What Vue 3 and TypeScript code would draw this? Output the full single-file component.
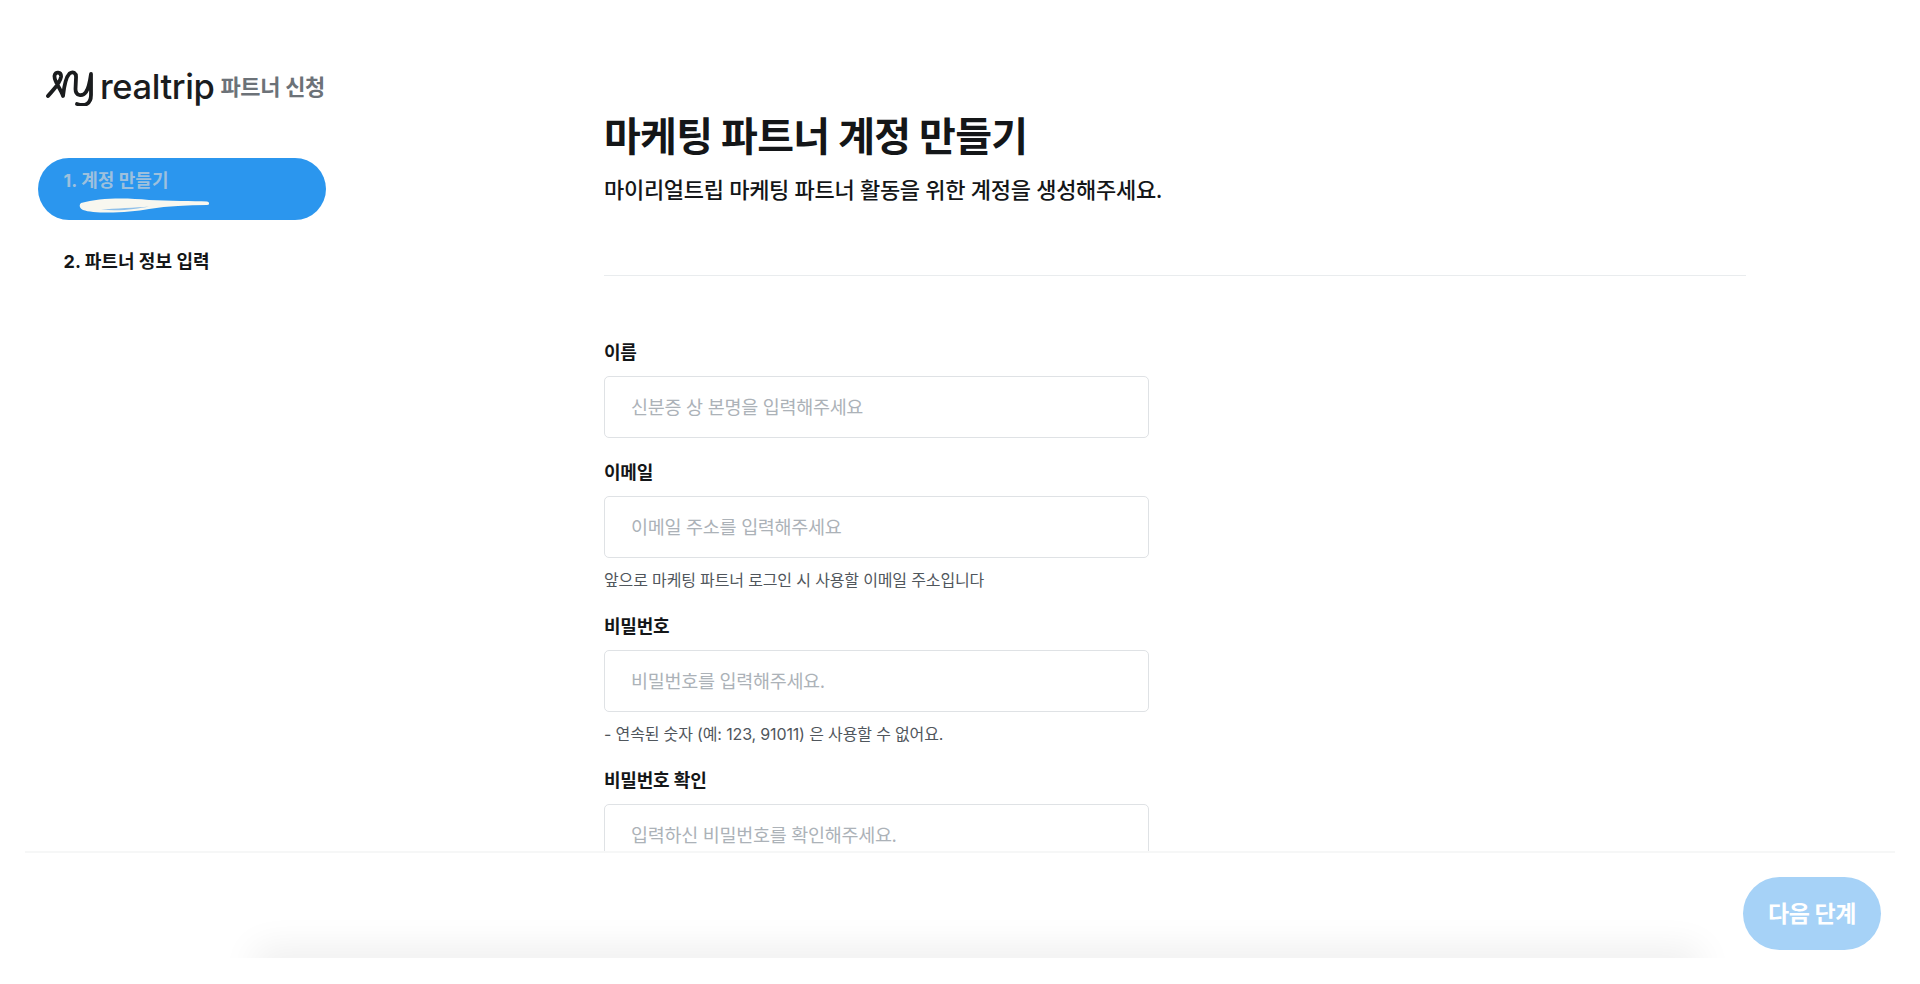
<script setup lang="ts">
interface Field {
  label: string
  placeholder: string
  help?: string
}

const fields: Field[] = [
  { label: '이름', placeholder: '신분증 상 본명을 입력해주세요' },
  {
    label: '이메일',
    placeholder: '이메일 주소를 입력해주세요',
    help: '앞으로 마케팅 파트너 로그인 시 사용할 이메일 주소입니다',
  },
  {
    label: '비밀번호',
    placeholder: '비밀번호를 입력해주세요.',
    help: '- 연속된 숫자 (예: 123, 91011) 은 사용할 수 없어요.',
  },
  { label: '비밀번호 확인', placeholder: '입력하신 비밀번호를 확인해주세요.' },
]
</script>

<template>
  <div class="page">
    <div class="main">
      <aside class="side">
        <div class="brand">
          <svg class="mark" width="54" height="38" viewBox="0 0 54 38" fill="none" aria-hidden="true">
            <path
              d="M2 28 C6 23 14 16 15 9 C15.5 3.5 9 3 8.5 8 C8 14 15 21 17 28 C18 19 20 9 23.5 5.5 C27 3 30.5 5 30 10 L29.5 21 C29.5 28 36.5 29 40 24 C43 20 44 13 45 6 L45 27 C45 36 39 38.5 31 36"
              stroke="#1a1c1e"
              stroke-width="3.8"
              stroke-linecap="round"
              stroke-linejoin="round"
            />
          </svg>
          <span class="word">realtrip</span>
          <span class="brand-sub">파트너 신청</span>
        </div>
        <nav class="steps">
          <div class="step step-active">
            <span class="step-title">1. 계정 만들기</span>
            <svg class="scribble" width="130" height="18" viewBox="0 0 130 18" aria-hidden="true">
              <path
                d="M2 6 C20 1 45 0.5 70 3 C90 4 115 4 128 4.5 C131 5.5 131 8 128 8 C108 8 90 9 70 12 C50 16 15 17 4 13 C0 11 0 8 2 6 Z"
                fill="#f8f7ef"
              />
              <path d="M22 12.5 C35 11.5 58 10.5 70 9.5 C58 12 40 14.5 22 12.5 Z" fill="#8fc0ea" />
            </svg>
          </div>
          <div class="step step-next">2. 파트너 정보 입력</div>
        </nav>
      </aside>

      <section class="content">
        <header class="head">
          <h1>마케팅 파트너 계정 만들기</h1>
          <p>마이리얼트립 마케팅 파트너 활동을 위한 계정을 생성해주세요.</p>
        </header>
        <form class="form" @submit.prevent>
          <div v-for="field in fields" :key="field.label" class="field">
            <label>{{ field.label }}</label>
            <input type="text" :placeholder="field.placeholder" />
            <small v-if="field.help">{{ field.help }}</small>
          </div>
        </form>
      </section>
    </div>

    <footer class="foot">
      <div class="foot-shade"></div>
      <button type="button" class="next">다음 단계</button>
    </footer>
  </div>
</template>

<style>
html,
body {
  margin: 0;
  background: #fff;
}
</style>

<style scoped>
.page {
  width: 1920px;
  height: 984px;
  overflow: hidden;
  display: flex;
  flex-direction: column;
  background: #fff;
  font-family: Inter, "Noto Sans CJK KR", "Noto Sans", sans-serif;
  color: #141618;
}
.main {
  height: 851px;
  flex: none;
  overflow: hidden;
  display: flex;
}
.side {
  width: 604px;
  flex: none;
  box-sizing: border-box;
  padding: 68px 0 0 37.5px;
}
.brand {
  display: flex;
  align-items: center;
  height: 38px;
  margin-left: 8.5px;
}
.mark {
  flex: none;
  margin-right: 1px;
}
.word {
  font-size: 34.5px;
  font-weight: 500;
  letter-spacing: -0.4px;
  line-height: 38px;
  color: #1a1c1e;
  margin-left: -1px;
}
.brand-sub {
  margin-left: 6px;
  font-size: 22px;
  font-weight: 700;
  letter-spacing: -0.3px;
  color: #6c7278;
  line-height: 38px;
}
.steps {
  margin-top: 52px;
  width: 288px;
}
.step {
  box-sizing: border-box;
  padding-left: 26px;
  font-size: 18px;
  font-weight: 700;
  letter-spacing: 0.05px;
}
.step-active {
  height: 62px;
  border-radius: 31px;
  background: #2b96ee;
  color: #9dc0dd;
  padding-top: 9px;
  line-height: 27px;
  position: relative;
}
.step-title {
  display: block;
}
.scribble {
  position: absolute;
  left: 41.5px;
  top: 39px;
}
.step-next {
  margin-top: 30px;
  line-height: 24px;
  color: #141618;
}
.content {
  width: 1142px;
  flex: none;
  padding-top: 112px;
}
.head {
  height: 164px;
  border-bottom: 1px solid #e9ecee;
  box-sizing: border-box;
}
.head h1 {
  margin: 0;
  font-size: 40px;
  line-height: 50px;
  font-weight: 700;
  letter-spacing: -0.7px;
}
.head p {
  margin: 12px 0 0;
  font-size: 22px;
  line-height: 32px;
  font-weight: 500;
  letter-spacing: -0.3px;
}
.form {
  width: 545px;
  padding-top: 64px;
}
.field {
  display: flex;
  flex-direction: column;
  margin-bottom: 22px;
}
label {
  font-size: 18px;
  font-weight: 600;
  line-height: 26px;
  letter-spacing: -0.2px;
  margin-bottom: 10px;
}
input {
  box-sizing: border-box;
  height: 62px;
  width: 100%;
  border: 1px solid #dfe2e5;
  border-radius: 5px;
  background: #fff;
  padding: 0 26px;
  font: inherit;
  font-size: 18.5px;
  letter-spacing: -0.3px;
  outline: none;
}
input::placeholder {
  color: #acb2b8;
  opacity: 1;
}
small {
  font-size: 16px;
  line-height: 24px;
  color: #50565c;
  margin-top: 10px;
  letter-spacing: -0.15px;
}
.foot {
  position: relative;
  flex: none;
  height: 133px;
  margin: 0 25px;
  box-sizing: border-box;
  border-top: 2px solid #f6f7f7;
  display: flex;
  align-items: flex-start;
  justify-content: flex-end;
  padding: 24px 14px 0 0;
}
.foot-shade {
  position: absolute;
  left: 170px;
  right: 135px;
  top: 50px;
  height: 55px;
  overflow: hidden;
}
.foot-shade::after {
  content: "";
  position: absolute;
  left: 70px;
  right: 70px;
  bottom: -20px;
  height: 20px;
  box-shadow: 0 0 36px 10px rgba(0, 0, 0, 0.07);
}
.next {
  position: relative;
  width: 138px;
  height: 73px;
  border: none;
  border-radius: 37px;
  background: #a6d2f7;
  color: #fff;
  font: inherit;
  font-size: 23px;
  font-weight: 700;
  letter-spacing: -0.4px;
  padding: 0 0 4px;
}
</style>
